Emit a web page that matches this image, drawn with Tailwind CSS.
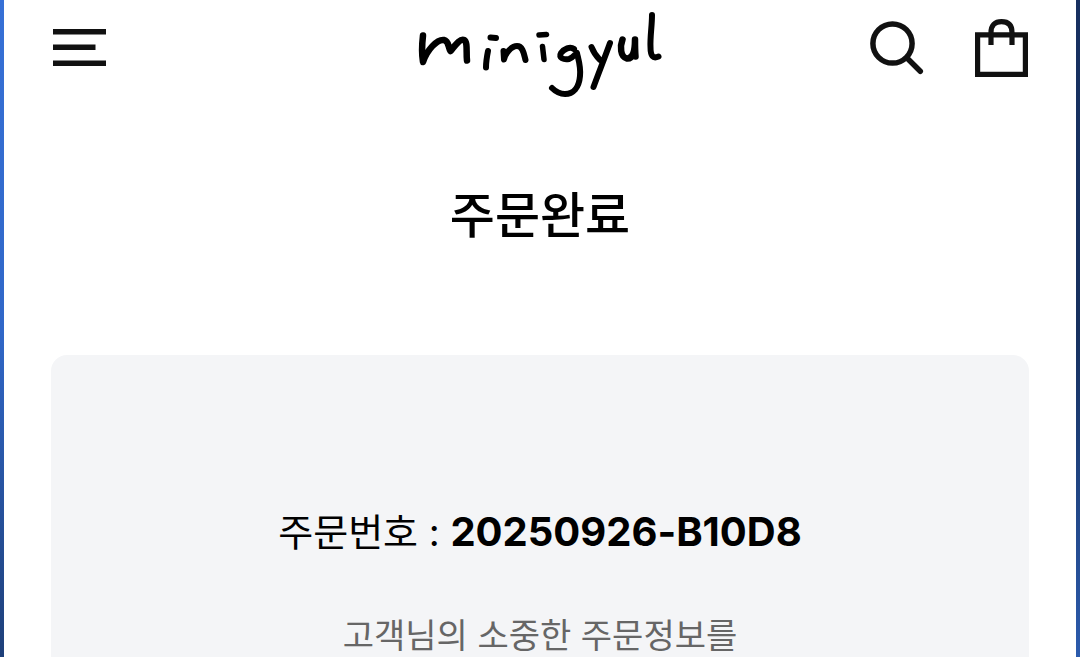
<!DOCTYPE html>
<html lang="ko">

<head>
    <meta charset="UTF-8">
    <meta name="viewport" content="width=device-width, initial-scale=1">
    <title>주문완료 | minigyul</title>
    <script src="https://cdn.jsdelivr.net/npm/@tailwindcss/browser@4"></script>
</head>

<body class="min-h-screen flex bg-white text-black font-['Inter','Noto_Sans_CJK_KR',sans-serif] overflow-x-hidden">

    <!-- Left edge -->
    <div class="w-1 shrink-0 bg-linear-to-b from-[#3670d6] via-[#3067c8] to-[#1e3f78]"></div>

    <div class="flex-1 min-w-0">
        <header class="grid grid-cols-3 items-start px-12 h-[110px]">
            <button type="button" aria-label="메뉴" class="justify-self-start mt-7">
                <svg class="w-[58px] h-10" viewBox="0 0 58 40" fill="#111">
                    <path d="M1 1h53v5.500H1zM1 16.500h42.500v5.500H1zM1 32.500h53v5.500H1z" />
                </svg>
            </button>

            <a href="#" aria-label="minigyul" class="justify-self-center">
                <svg class="w-[260px] h-[105px]" viewBox="0 0 260 105" fill="none" stroke="#000" stroke-width="6.500" stroke-linecap="round" stroke-linejoin="round">
                    <path d="M13 35.500C12 44 11.500 53 13 62C17 50 27 39 34 40C39 41 38 47 40.500 51C44 47 50 38 54 40C58 42 56 53 57 60.500" />
                    <path d="M78 51C77 56 76 61 76 67.500M80.500 37.500L86 38" stroke-width="6" />
                    <path d="M93.500 51L94 59.500C95 54 101 46 107 46C113 46 114 54 115.500 60" stroke-width="6" />
                    <path d="M132.500 46.500L134 59.500M129 35L136.500 34.500" stroke-width="5.500" />
                    <path d="M164 49C160 46 154 49 151 53C148 58 154 60 159 59C163 58 165 54 167 53C168 58 171 66 170 76C169 88 163 94 155 94C149 94 145 91 142 88" stroke-width="6" />
                    <path d="M181.500 47C183 51 186 56 190 60M200 43C195 57 189 72 183.500 87" stroke-width="6" />
                    <path d="M212.500 39.500C210 46 210 57 217 58.500C223 59 225 51 225 39.500C225 46 225 51 225.500 56.500" stroke-width="6.500" />
                    <path d="M242 15C242 26 240 37 240.500 47C240.500 56 243 59 248.500 56.500" stroke-width="6" />
                </svg>
            </a>

            <div class="justify-self-end flex items-start gap-12 mt-4">
                <button type="button" aria-label="검색">
                    <svg class="w-[58px] h-16" viewBox="0 0 58 64" fill="none" stroke="#111" stroke-width="5.500" stroke-linecap="round">
                        <circle cx="24.500" cy="27.500" r="19.600" />
                        <path d="M39 42L52.300 55.300" />
                    </svg>
                </button>
                <button type="button" aria-label="장바구니">
                    <svg class="w-[54px] h-16" viewBox="0 0 54 64" fill="none" stroke="#111" stroke-width="5.200">
                        <path d="M3.600 18.800H51.400V58.400H3.600Z" />
                        <path d="M17 29V16.500C17 9 21 5.600 27.500 5.600S38 9 38 16.500V29" />
                    </svg>
                </button>
            </div>
        </header>

        <main class="px-[47px] pt-[70px]">
            <h1 class="text-center text-[49px] leading-[72px] font-medium">주문완료</h1>

            <section class="mt-[103px] min-h-[302px] rounded-t-2xl bg-[#f4f5f7] pt-[144px] text-center">
                <p class="text-[38px] leading-[66px]">주문번호 : <strong class="text-[40px] font-bold">20250926-B10D8</strong></p>
                <p class="mt-[45px] text-[34px] leading-[52px] text-[#666]">고객님의 소중한 주문정보를</p>
            </section>
        </main>
    </div>

    <!-- Right edge -->
    <div class="w-1 shrink-0 bg-linear-to-b from-[#183060] via-[#17315f] to-[#2c5cae]"></div>

</body>

</html>
